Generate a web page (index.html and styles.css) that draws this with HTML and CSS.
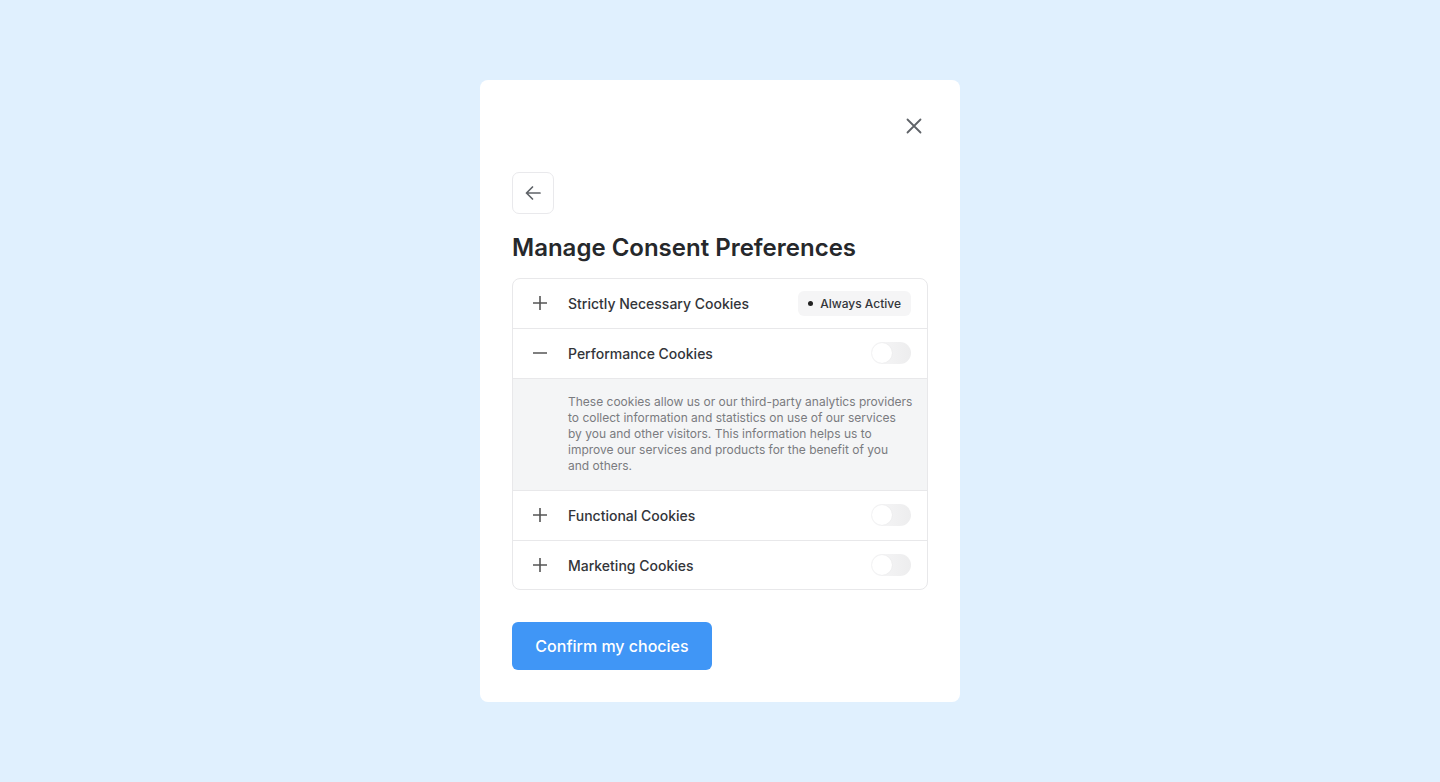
FILE: index.html
```html
<!DOCTYPE html>
<html lang="en">
<head>
<meta charset="utf-8">
<title>Manage Consent Preferences</title>
<link rel="stylesheet" href="styles.css">
</head>
<body>
<div class="page">
  <div class="modal">
    <div class="top">
      <button class="close" aria-label="Close">
        <svg width="20" height="20" viewBox="0 0 20 20"><path d="M3.5 3.5L16.5 16.5M16.5 3.5L3.5 16.5" stroke="#5f6368" stroke-width="1.8" stroke-linecap="round" fill="none"/></svg>
      </button>
    </div>
    <button class="back" aria-label="Back">
      <svg width="20" height="20" viewBox="0 0 20 20"><path d="M17 10H3.5M9.5 4L3.5 10l6 6" stroke="#5f6368" stroke-width="1.7" stroke-linecap="round" stroke-linejoin="round" fill="none"/></svg>
    </button>
    <h1 class="title">Manage Consent Preferences</h1>
    <div class="list">
      <div class="row">
        <span class="icon"><svg width="16" height="16" viewBox="0 0 16 16"><path d="M8 1v14M1 8h14" stroke="#555" stroke-width="1.6" fill="none"/></svg></span>
        <span class="label">Strictly Necessary Cookies</span>
        <span class="badge"><span class="dot"></span>Always Active</span>
      </div>
      <div class="row">
        <span class="icon"><svg width="16" height="16" viewBox="0 0 16 16"><path d="M1 8h14" stroke="#555" stroke-width="1.6" fill="none"/></svg></span>
        <span class="label">Performance Cookies</span>
        <span class="toggle"><span class="knob"></span></span>
      </div>
      <div class="desc">
        <p>These cookies allow us or our third-party analytics providers<br>to collect information and statistics on use of our services<br>by you and other visitors. This information helps us to<br>improve our services and products for the benefit of you<br>and others.</p>
      </div>
      <div class="row">
        <span class="icon"><svg width="16" height="16" viewBox="0 0 16 16"><path d="M8 1v14M1 8h14" stroke="#555" stroke-width="1.6" fill="none"/></svg></span>
        <span class="label">Functional Cookies</span>
        <span class="toggle"><span class="knob"></span></span>
      </div>
      <div class="row">
        <span class="icon"><svg width="16" height="16" viewBox="0 0 16 16"><path d="M8 1v14M1 8h14" stroke="#555" stroke-width="1.6" fill="none"/></svg></span>
        <span class="label">Marketing Cookies</span>
        <span class="toggle"><span class="knob"></span></span>
      </div>
    </div>
    <button class="confirm">Confirm my chocies</button>
  </div>
</div>
</body>
</html>
```

FILE: styles.css
```css
* { box-sizing: border-box; }
html, body { margin: 0; padding: 0; }
body {
  background: #e0f0fe;
  font-family: Inter, "Noto Sans", sans-serif;
  color: #2a2b2e;
}
.page {
  height: 782px;
  display: flex;
  justify-content: center;
  padding-top: 80px;
}
.modal {
  width: 480px;
  height: 622px;
  background: #fff;
  border-radius: 8px;
  padding: 32px;
  display: flex;
  flex-direction: column;
  align-items: flex-start;
}
.top {
  width: 100%;
  display: flex;
  justify-content: flex-end;
  height: 60px;
  align-items: flex-start;
}
.close {
  width: 28px;
  height: 28px;
  border: 0;
  background: none;
  padding: 0;
  display: flex;
  align-items: center;
  justify-content: center;
}
.back {
  width: 42px;
  height: 42px;
  border: 1px solid #e9e9ec;
  border-radius: 7px;
  background: #fff;
  padding: 0;
  display: flex;
  align-items: center;
  justify-content: center;
}
.title {
  margin: 18px 0 14px;
  font-size: 24px;
  line-height: 32px;
  font-weight: 600;
  color: #26282b;
  letter-spacing: 0;
}
.list {
  width: 100%;
  border: 1px solid #e8e8ea;
  border-radius: 8px;
  overflow: hidden;
}
.row {
  height: 50px;
  display: flex;
  align-items: center;
  padding: 0 16px 0 19px;
  border-top: 1px solid #e8e8ea;
}
.row:first-child { border-top: 0; height: 49px; }
.icon {
  width: 16px;
  height: 16px;
  display: flex;
  margin-right: 20px;
}
.label {
  flex: 1;
  font-size: 14px;
  font-weight: 500;
  color: #33353a;
}
.badge {
  display: flex;
  align-items: center;
  height: 25px;
  padding: 0 10px 0 10px;
  background: #f5f5f6;
  border-radius: 6px;
  font-size: 12px;
  font-weight: 500;
  color: #33353a;
}
.dot {
  width: 5px;
  height: 5px;
  border-radius: 50%;
  background: #222;
  margin-right: 7px;
}
.toggle {
  width: 40px;
  height: 22px;
  border-radius: 11px;
  background: linear-gradient(90deg, #f7f7f8, #ededee);
  padding: 1px;
  display: flex;
  align-items: center;
}
.knob {
  width: 20px;
  height: 20px;
  border-radius: 50%;
  background: #fff;
  box-shadow: 0 0 2px rgba(0,0,0,0.06);
}
.desc {
  background: #f4f5f6;
  border-top: 1px solid #e8e8ea;
  padding: 15px 4px 16px 55px;
  height: 112px;
}
.desc p {
  margin: 0;
  font-size: 12px;
  line-height: 16px;
  color: #7a7b7f;
  white-space: nowrap;
}
.confirm {
  margin-top: 32px;
  width: 200px;
  height: 48px;
  border: 0;
  border-radius: 6px;
  background: #4096f6;
  color: #fff;
  font-family: Inter, "Noto Sans", sans-serif;
  font-size: 16px;
  font-weight: 500;
}
```
